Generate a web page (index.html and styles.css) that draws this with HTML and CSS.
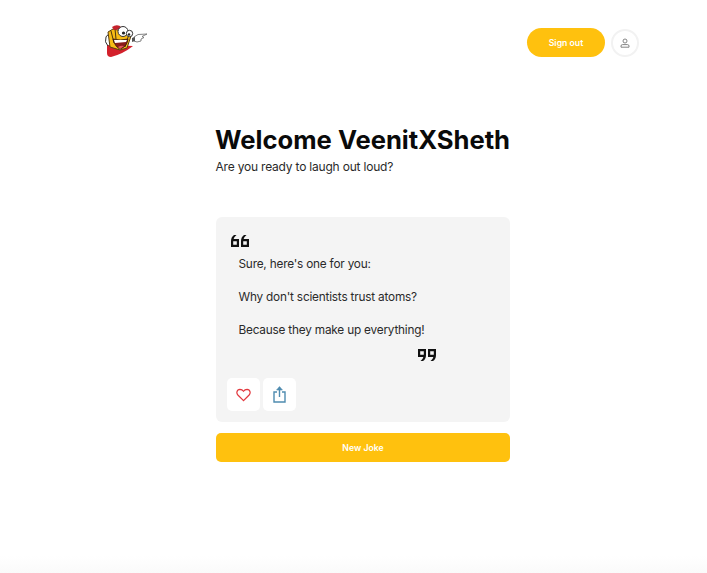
FILE: index.html
```html
<html>
<head>
    <title>jokes</title>
    <link rel="stylesheet" href="styles.css">
</head>
<body>
    <div class="topbar">
        <svg class="logo" width="42" height="33" viewBox="0 0 42 33">
            <path d="M2 20 L28 21 Q18 29 6 32 Q2 32 2 28 Z" fill="#d3202b"/>
            <path d="M3 21 Q-1 17 1 12 Q2 10 3 10" fill="none" stroke="#333" stroke-width="1"/>
            <path d="M3 7 L8 4 L27 8 L22 23 L15 25 L5 22 Z" fill="#f7bb16" stroke="#5a3f10" stroke-width="1"/>
            <path d="M6 6 L9 18 M10 4 L11 14 M24 9 L20 22" fill="none" stroke="#4a3510" stroke-width="1"/>
            <path d="M7 2 Q11 -1 15 1 L17 4 L9 5 Z" fill="#c5222c"/>
            <circle cx="18" cy="6.5" r="5" fill="#fff" stroke="#333"/>
            <circle cx="24.5" cy="8.5" r="3.2" fill="#fff" stroke="#333"/>
            <circle cx="18.5" cy="8" r="1.6" fill="#222"/>
            <circle cx="24" cy="9.5" r="1.2" fill="#222"/>
            <path d="M8 14 Q15 16 23 14 Q22 22 15 24 Q10 22 8 14 Z" fill="#8a1c18" stroke="#2d1a10" stroke-width="0.8"/>
            <path d="M9 15 L22 15 L21 17 L10 18 Z" fill="#fff"/>
            <path d="M13 22 Q16 20 19 21 L15 24 Z" fill="#e8555a"/>
            <path d="M29 12 L33 9.5 L42 9 L37 11.5 L39 12.5 L36 14 L36 16 L32 17 L29 16 Z" fill="#fff" stroke="#666" stroke-width="0.8"/>
            <path d="M27 13 L30 12 L30 16 L27 17 Z" fill="#555"/>
        </svg>
        <div class="account">
            <button class="signout">Sign out</button>
            <div class="avatar">
                <svg width="10" height="10" viewBox="0 0 10 10" fill="none" stroke="#777" stroke-width="0.9">
                    <circle cx="5" cy="3" r="2"/>
                    <path d="M1 9.2 V8 Q1 6.6 2.6 6.6 H7.4 Q9 6.6 9 8 V9.2 Z"/>
                </svg>
            </div>
        </div>
    </div>
    <div class="main">
        <h1>Welcome VeenitXSheth</h1>
        <p class="sub">Are you ready to laugh out loud?</p>
        <div class="card">
            <svg class="quote" width="18" height="12" viewBox="0 0 18 12" fill="#111">
                <path d="M0 12 V6 Q0 2 3 0 H5.5 Q3 2 2.6 4 H8 V12 Z M2.2 6.2 V9.8 H5.8 V6.2 Z"/>
                <path d="M10 12 V6 Q10 2 13 0 H15.5 Q13 2 12.6 4 H18 V12 Z M12.2 6.2 V9.8 H15.8 V6.2 Z"/>
            </svg>
            <div class="joke">
                <p>Sure, here's one for you:</p>
                <p>Why don't scientists trust atoms?</p>
                <p>Because they make up everything!</p>
            </div>
            <svg class="quote quote-end" width="18" height="12" viewBox="0 0 18 12" fill="#111">
                <path d="M8 0 V6 Q8 10 5 12 H2.5 Q5 10 5.4 8 H0 V0 Z M5.8 5.8 V2.2 H2.2 V5.8 Z"/>
                <path d="M18 0 V6 Q18 10 15 12 H12.5 Q15 10 15.4 8 H10 V0 Z M15.8 5.8 V2.2 H12.2 V5.8 Z"/>
            </svg>
            <div class="actions">
                <div class="iconbtn">
                    <svg width="15" height="14" viewBox="0 0 16 14" fill="none" stroke="#e2393f" stroke-width="1.3">
                        <path d="M8 13 L2 7 Q0.6 5.4 1 3.6 Q1.6 1 4.2 0.9 Q6.6 0.9 8 3 Q9.4 0.9 11.8 0.9 Q14.4 1 15 3.6 Q15.4 5.4 14 7 Z"/>
                    </svg>
                </div>
                <div class="iconbtn">
                    <svg width="13" height="17" viewBox="0 0 13 17" fill="none" stroke="#4f8cb0" stroke-width="1.4">
                        <path d="M4 6 H1 V16 H12 V6 H9"/>
                        <path d="M6.5 11 V2"/>
                        <path d="M3.6 4 L6.5 0.6 L9.4 4 Z" fill="#4f8cb0" stroke-width="0.6"/>
                    </svg>
                </div>
            </div>
        </div>
        <button class="newjoke">New Joke</button>
    </div>
</body>
</html>
```

FILE: styles.css
```css
* {
    margin: 0px;
    box-sizing: border-box;
}

body {
    background: linear-gradient(to bottom, #fff 97%, #fafafa);
    font-family: "Inter", "Liberation Sans", sans-serif;
    color: #111;
    height: 573px;
    overflow: hidden;
}

button {
    font-family: inherit;
    border: 0;
    color: #fff;
    font-weight: 600;
    background: #ffc10e;
}

.topbar {
    display: flex;
    justify-content: space-between;
    align-items: flex-start;
    padding: 25px 68px 0 105px;
}

.account {
    display: flex;
    align-items: center;
    gap: 6px;
    margin-top: 3px;
}

.signout {
    width: 78px;
    height: 29px;
    border-radius: 15px;
    font-size: 8.7px;
}

.avatar {
    width: 28px;
    height: 28px;
    border-radius: 50%;
    border: 2px solid #f2f2f2;
    display: flex;
    align-items: center;
    justify-content: center;
}

.main {
    width: 294px;
    margin-left: 216px;
    padding-top: 66px;
}

h1 {
    font-size: 25.6px;
    line-height: 32px;
    font-weight: 700;
    color: #0a0a0a;
    white-space: nowrap;
    margin: 0 0 1px -1px;
}

.sub {
    font-size: 12px;
    letter-spacing: -0.2px;
    line-height: 20px;
    color: #2a2a2a;
    margin-left: -0.5px;
}

.card {
    margin-top: 40px;
    height: 205px;
    background: #f4f4f4;
    border-radius: 6px;
    padding: 18px 11px 11px 15px;
    display: flex;
    flex-direction: column;
}

.quote {
    display: block;
}

.joke {
    font-size: 11.8px;
    letter-spacing: -0.2px;
    line-height: 17px;
    color: #2a2a2a;
    padding: 9px 0 0 7.5px;
}

.joke p {
    margin-bottom: 16px;
}

.quote-end {
    margin: -6px 0 0 186.5px;
}

.actions {
    display: flex;
    gap: 2.5px;
    margin: auto 0 0 -4px;
}

.iconbtn {
    width: 33px;
    height: 33px;
    background: #fff;
    border-radius: 5px;
    display: flex;
    align-items: center;
    justify-content: center;
}

.newjoke {
    display: block;
    width: 100%;
    height: 29px;
    margin-top: 11px;
    border-radius: 5px;
    font-size: 8.7px;
}
```
